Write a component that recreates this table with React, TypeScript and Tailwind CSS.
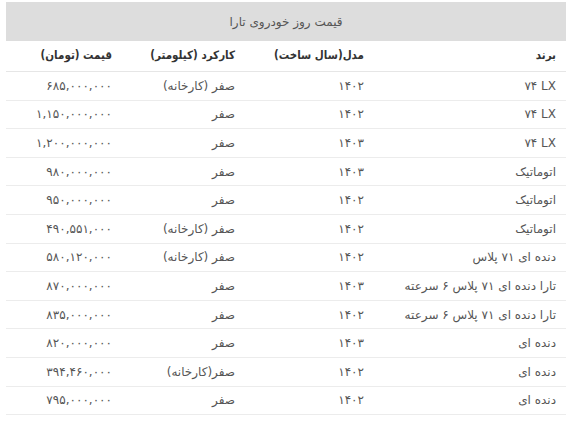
const rows = [
  ["۷۴ LX", "۱۴۰۲", "صفر (کارخانه)", "۶۸۵,۰۰۰,۰۰۰"],
  ["۷۴ LX", "۱۴۰۲", "صفر", "۱,۱۵۰,۰۰۰,۰۰۰"],
  ["۷۴ LX", "۱۴۰۳", "صفر", "۱,۲۰۰,۰۰۰,۰۰۰"],
  ["اتوماتیک", "۱۴۰۳", "صفر", "۹۸۰,۰۰۰,۰۰۰"],
  ["اتوماتیک", "۱۴۰۲", "صفر", "۹۵۰,۰۰۰,۰۰۰"],
  ["اتوماتیک", "۱۴۰۲", "صفر (کارخانه)", "۴۹۰,۵۵۱,۰۰۰"],
  ["دنده ای ۷۱ پلاس", "۱۴۰۲", "صفر (کارخانه)", "۵۸۰,۱۲۰,۰۰۰"],
  ["تارا دنده ای ۷۱ پلاس ۶ سرعته", "۱۴۰۳", "صفر", "۸۷۰,۰۰۰,۰۰۰"],
  ["تارا دنده ای ۷۱ پلاس ۶ سرعته", "۱۴۰۲", "صفر", "۸۳۵,۰۰۰,۰۰۰"],
  ["دنده ای", "۱۴۰۳", "صفر", "۸۲۰,۰۰۰,۰۰۰"],
  ["دنده ای", "۱۴۰۲", "صفر(کارخانه)", "۳۹۴,۴۶۰,۰۰۰"],
  ["دنده ای", "۱۴۰۲", "صفر", "۷۹۵,۰۰۰,۰۰۰"],
];

const headers = ["برند", "مدل(سال ساخت)", "کارکرد (کیلومتر)", "قیمت (تومان)"];

const gridCols = "grid grid-cols-[192px_129px_123px_116px]";

// brand names that start with latin model codes read left to right
const isLatin = (text: string) => /[A-Z]/.test(text);

export default function App() {
  return (
    <div className="min-h-[421px] w-[577px] bg-white pl-[6px] pt-[2px]">
      <div dir="rtl" className="w-[560px] font-['DejaVu_Sans',sans-serif]">
        <div className="flex h-[39px] items-center justify-center bg-[#dddddd] text-[12px] text-[#555]">
          قیمت روز خودروی تارا
        </div>
        <div
          className={`${gridCols} h-[31px] items-center border-b border-[#e6e6e6] font-['DejaVu_Sans_Condensed','DejaVu_Sans',sans-serif] text-[11.5px] font-bold text-[#333]`}
        >
          {headers.map((h) => (
            <div key={h} className="whitespace-nowrap px-[10px]">
              {h}
            </div>
          ))}
        </div>
        {rows.map((row, i) => (
          <div
            key={i}
            className={`${gridCols} h-[28.6px] items-center border-b border-[#ececec] text-[12px] text-[#555]`}
          >
            {row.map((cell, j) => (
              <div key={j} className="whitespace-nowrap px-[10px]">
                {isLatin(cell) ? <span dir="ltr">{cell}</span> : cell}
              </div>
            ))}
          </div>
        ))}
      </div>
    </div>
  );
}
